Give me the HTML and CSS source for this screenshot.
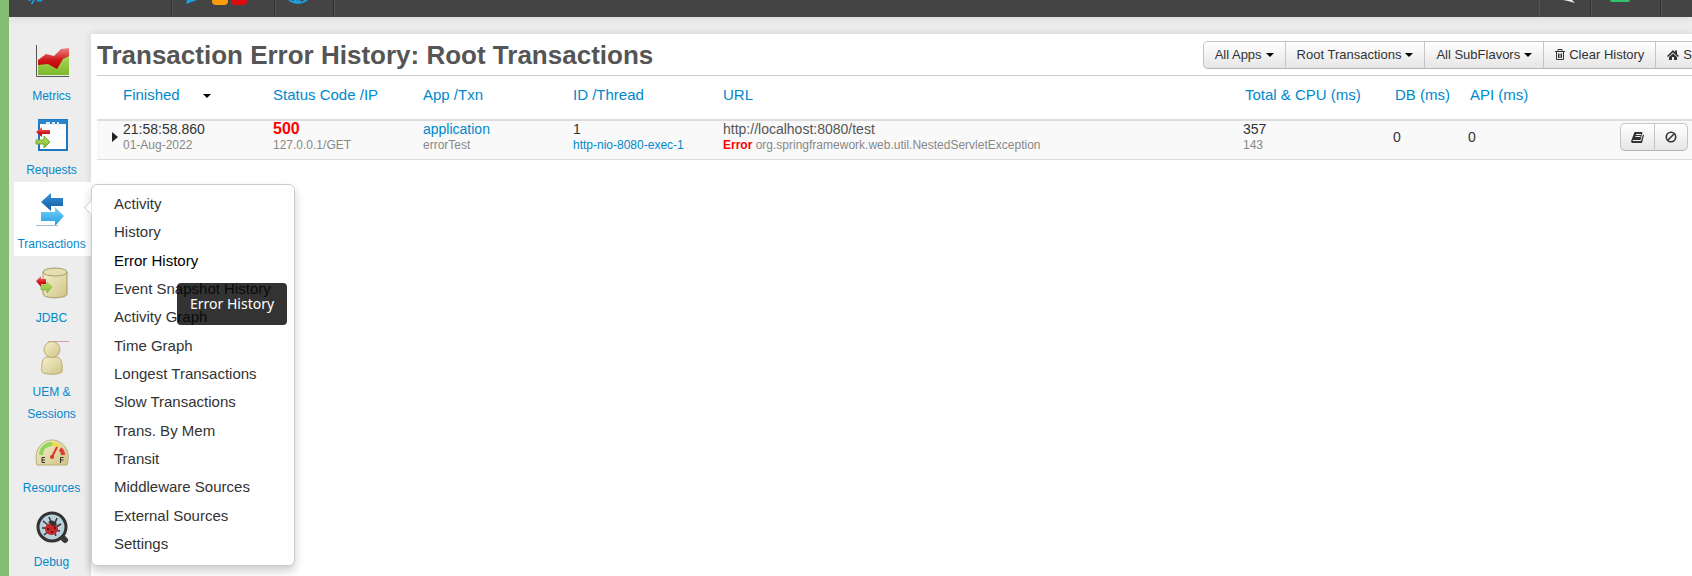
FILE: index.html
```html
<!DOCTYPE html>
<html lang="en">
<head>
    <meta charset="UTF-8">
    <meta name="viewport" content="width=device-width, initial-scale=1.0">
    <title>Transaction Error History</title>
    <link rel="stylesheet" href="styles.css">
</head>
<body>
    <header class="topbar">
        <div class="topbar-cell brand">
            <svg width="16" height="5" viewBox="0 0 16 5"><path d="M0 0h3M6 0L3.500 4M9 0q3 2 5 0" stroke="#1ba1e2" stroke-width="1.600" fill="none"/></svg>
        </div>
        <div class="topbar-cell alerts">
            <svg width="11" height="4" viewBox="0 0 11 4"><path d="M1 0h10L0 4z" fill="#1ba1e2"/></svg>
            <span class="pill warn"></span>
            <span class="pill crit"></span>
        </div>
        <div class="topbar-cell globe">
            <svg width="20" height="5" viewBox="0 0 20 5"><path d="M1 0q9 6 18 0M6 0l4 2 2-2" stroke="#1ba1e2" stroke-width="2" fill="none"/></svg>
        </div>
        <div class="topbar-space"></div>
        <div class="topbar-cell search">
            <svg width="12" height="3" viewBox="0 0 12 3"><path d="M0 0h9l3 3-7-2z" fill="#eee"/></svg>
        </div>
        <div class="topbar-cell status"><span class="pill ok"></span></div>
        <div class="topbar-cell last"></div>
    </header>

    <div class="layout">
        <nav class="sidebar">
            <a class="nav-item" href="#">
                <svg class="nav-icon" viewBox="0 0 32 32">
                    <defs>
                        <linearGradient id="red" x1="0" y1="0" x2="0" y2="1"><stop offset="0" stop-color="#f08080"/><stop offset=".6" stop-color="#cc1518"/><stop offset="1" stop-color="#b00"/></linearGradient>
                        <linearGradient id="green" x1="0" y1="0" x2="0" y2="1"><stop offset="0" stop-color="#bfe36a"/><stop offset="1" stop-color="#7cb82c"/></linearGradient>
                        <linearGradient id="cream" x1="0" y1="0" x2="1" y2="1"><stop offset="0" stop-color="#f5f0cf"/><stop offset="1" stop-color="#cfc484"/></linearGradient>
                        <linearGradient id="blue" x1="0" y1="0" x2="0" y2="1"><stop offset="0" stop-color="#3a8fd4"/><stop offset="1" stop-color="#0c5ea8"/></linearGradient>
                        <linearGradient id="sky" x1="0" y1="0" x2="0" y2="1"><stop offset="0" stop-color="#7dd4fa"/><stop offset="1" stop-color="#1c9be0"/></linearGradient>
                    </defs>
                    <path d="M2 17l9-5 7 4 7-10 8-2v26H2z" fill="url(#green)"/>
                    <path d="M2 15l8-6 8 2 7-7 8-1v8l-6 3-6 10-9-5-10 1z" fill="url(#red)"/>
                    <path d="M.5 0v31.500H33" stroke="#555" fill="none"/>
                </svg>
                <span>Metrics</span>
            </a>
            <a class="nav-item" href="#">
                <svg class="nav-icon" viewBox="0 0 32 32">
                    <path d="M3 1h28v30H3z" fill="#fdfdfd" stroke="#1c78bf" stroke-width="2"/>
                    <path d="M3 1h28v4H3z" fill="#2a86cc"/>
                    <path d="M10 3h4v3h-4zM16 3h3v3h-3zM21 3h2v3h-2z" fill="#dcebf5"/>
                    <path d="M0 13l6-5v3h8v4H6v3z" fill="url(#red)"/>
                    <path d="M14 23l-6-6v4H0v4h8v4z" fill="url(#green)" stroke="#79a83a"/>
                </svg>
                <span>Requests</span>
            </a>
            <a class="nav-item active" href="#">
                <svg class="nav-icon" viewBox="0 0 32 32">
                    <path d="M5 9L15 0v5h12v8H15v5z" fill="url(#blue)"/>
                    <path d="M28 23l-9-9v5H5v9h14v5z" fill="url(#sky)"/>
                    <path d="M0 32.500h22" stroke="#9cc0dc"/>
                </svg>
                <span>Transactions</span>
            </a>
            <a class="nav-item" href="#">
                <svg class="nav-icon" viewBox="0 0 32 32">
                    <path d="M7 5v22c0 5 24 5 24 0V5z" fill="url(#cream)" stroke="#a59b66"/>
                    <ellipse cx="19" cy="5" rx="12" ry="4" fill="#e5deb0" stroke="#a59b66"/>
                    <path d="M0 14l5-5v3h5v5H5v3z" fill="url(#red)"/>
                    <path d="M16 20l-5-5v3H5v5h6v3z" fill="url(#green)" stroke="#7fae45" stroke-width=".6"/>
                </svg>
                <span>JDBC</span>
            </a>
            <a class="nav-item" href="#">
                <svg class="nav-icon" viewBox="0 0 32 32">
                    <path d="M12 .500h21" stroke="#d5a0a0"/>
                    <path d="M6 31c-1-9 1-15 5-15h9c5 0 7 6 6 15-3 3-17 3-20 0z" fill="url(#cream)" stroke="#b9ae78"/>
                    <circle cx="16" cy="8.500" r="8" fill="url(#cream)" stroke="#b9ae78"/>
                </svg>
                <span>UEM &amp; Sessions</span>
            </a>
            <a class="nav-item" href="#">
                <svg class="nav-icon" viewBox="0 0 32 32">
                    <path d="M1 28C-3 12 7 3 16 3s20 9 15 25z" fill="url(#cream)" stroke="#b9ae78"/>
                    <path d="M5 18c0-6 4-11 11-11" stroke="#8fd45c" stroke-width="4" fill="none"/>
                    <path d="M16 7q4 0 7 3" stroke="#ecd94c" stroke-width="4" fill="none"/>
                    <path d="M24 12q3 2 3 6" stroke="#e03a36" stroke-width="4" fill="none"/>
                    <path d="M21 10l-5 10" stroke="#d8312f" stroke-width="2"/>
                    <circle cx="16" cy="20" r="2" fill="#d8312f"/>
                    <path d="M9 20.500H6v5h3M6 23h3M24.500 26v-5.500h3M24.500 23h3" stroke="#333" fill="none"/>
                </svg>
                <span>Resources</span>
            </a>
            <a class="nav-item" href="#">
                <svg class="nav-icon" viewBox="0 0 32 32">
                    <path d="M25 25l4 4" stroke="#3a3a3a" stroke-width="6" stroke-linecap="round"/>
                    <circle cx="16" cy="16" r="14" fill="#b9d0da" stroke="#333" stroke-width="3"/>
                    <path d="M7 10l5 4M6 17h6M8 24l5-4M13 6l2 5M21 7l-2 5M25 13l-5 3M24 20l-5-1M20 25l-2-5" stroke="#333" stroke-width="1.500"/>
                    <ellipse cx="15.500" cy="18" rx="6.500" ry="6" fill="#c9262c"/>
                    <path d="M12 11q5-4 9 2l-3 3z" fill="#333"/>
                    <path d="M11 17h2v2h-2zM15 20h2v2h-2zM18 16h2v2h-2z" fill="#611"/>
                </svg>
                <span>Debug</span>
            </a>

            <div class="submenu">
                <ul class="submenu-list">
                    <li><a href="#">Activity</a></li>
                    <li><a href="#">History</a></li>
                    <li><a class="current" href="#">Error History</a></li>
                    <li><a href="#">Event Snapshot History</a></li>
                    <li><a href="#">Activity Graph</a></li>
                    <li><a href="#">Time Graph</a></li>
                    <li><a href="#">Longest Transactions</a></li>
                    <li><a href="#">Slow Transactions</a></li>
                    <li><a href="#">Trans. By Mem</a></li>
                    <li><a href="#">Transit</a></li>
                    <li><a href="#">Middleware Sources</a></li>
                    <li><a href="#">External Sources</a></li>
                    <li><a href="#">Settings</a></li>
                </ul>
                <div class="tooltip" role="tooltip">Error History</div>
            </div>
        </nav>

        <main class="panel">
            <div class="panel-head">
                <h1>Transaction Error History: Root Transactions</h1>
                <div class="btn-group">
                    <button class="btn" type="button">All Apps <span class="caret"></span></button>
                    <button class="btn" type="button">Root Transactions <span class="caret"></span></button>
                    <button class="btn" type="button">All SubFlavors <span class="caret"></span></button>
                    <button class="btn" type="button">
                        <svg width="10" height="11" viewBox="0 0 10 11"><path d="M0 2.500h10M3 2V.500h4V2M1.500 3v7.500h7V3M3.500 4.500v4.500M5 4.500v4.500M6.500 4.500v4.500" stroke="#333" fill="none"/></svg>
                        Clear History
                    </button>
                    <button class="btn btn-cut" type="button">
                        <svg width="12" height="10" viewBox="0 0 12 10"><path d="M6 0l2 2V.500h2V4l2 2-1 1-5-4.500L1 7 0 6zM6 3.500L10 7v3H7V7H5v3H2V7z" fill="#333"/></svg>
                        S
                    </button>
                </div>
            </div>

            <table class="history">
                <colgroup>
                    <col class="col-toggle">
                    <col class="col-text">
                    <col class="col-text">
                    <col class="col-text">
                    <col class="col-text">
                    <col>
                    <col class="col-text">
                    <col class="col-num">
                    <col class="col-api">
                    <col class="col-actions">
                </colgroup>
                <thead>
                    <tr>
                        <th></th>
                        <th><a href="#">Finished</a><span class="caret sort"></span></th>
                        <th><a href="#">Status Code /IP</a></th>
                        <th><a href="#">App /Txn</a></th>
                        <th><a href="#">ID /Thread</a></th>
                        <th><a href="#">URL</a></th>
                        <th class="num"><a href="#">Total &amp; CPU (ms)</a></th>
                        <th class="num"><a href="#">DB (ms)</a></th>
                        <th class="num"><a href="#">API (ms)</a></th>
                        <th></th>
                    </tr>
                </thead>
                <tbody>
                    <tr>
                        <td class="mid"><span class="expander"></span></td>
                        <td><div>21:58:58.860</div><small>01-Aug-2022</small></td>
                        <td><div class="code">500</div><small>127.0.0.1/GET</small></td>
                        <td><div><a href="#">application</a></div><small>errorTest</small></td>
                        <td><div>1</div><small><a href="#">http-nio-8080-exec-1</a></small></td>
                        <td><div class="url">http://localhost:8080/test</div><small><b>Error</b> org.springframework.web.util.NestedServletException</small></td>
                        <td><div>357</div><small>143</small></td>
                        <td class="mid">0</td>
                        <td class="mid">0</td>
                        <td class="mid actions">
                            <div class="btn-group">
                                <button class="btn" type="button" aria-label="Details">
                                    <svg width="13" height="11" viewBox="0 0 13 11"><path d="M3.500 0h8L9.500 8H2L1.500 9h8.500L12 2.500l1 .5-2 8H1Q-.500 10 .500 8z" fill="#333"/><path d="M5 2.500h5M4.500 4.500h5" stroke="#eee"/></svg>
                                </button>
                                <button class="btn" type="button" aria-label="Ignore">
                                    <svg width="12" height="12" viewBox="0 0 12 12"><circle cx="6" cy="6" r="4.700" stroke="#333" stroke-width="1.600" fill="none"/><path d="M9 3L3 9" stroke="#333" stroke-width="1.600"/></svg>
                                </button>
                            </div>
                        </td>
                    </tr>
                </tbody>
            </table>
        </main>
    </div>
</body>
</html>
```
FILE: styles.css
```css
* {
    box-sizing: border-box;
}

body {
    margin: 0;
    min-height: 100vh;
    display: flex;
    flex-direction: column;
    border-left: 9px solid #85bc72;
    background: #ededed;
    color: #333;
    font-family: "Liberation Sans", Arial, sans-serif;
    font-size: 14px;
    line-height: 16px;
    overflow-x: hidden;
}

a {
    color: #0088cc;
    text-decoration: none;
}

/* Top bar */
.topbar {
    display: flex;
    height: 17px;
    background: #444;
    box-shadow: 0 1px 10px rgba(0,0,0,0.1);
}

.topbar-cell {
    display: flex;
    align-items: flex-start;
    border-right: 1px solid #2e2e2e;
    box-shadow: 1px 0 0 #555;
}

.topbar-space {
    flex: 1;
    border-right: 1px solid #555;
}

.brand {
    width: 163px;
    padding-left: 19px;
}

.alerts {
    width: 103px;
    padding-left: 14px;
}

.globe {
    width: 59px;
    padding-left: 13px;
}

.search {
    width: 51px;
    padding-left: 23px;
}

.status {
    width: 70px;
    padding-left: 19px;
}

.last {
    width: 31px;
    border-right: none;
}

.pill {
    width: 16px;
    height: 5px;
    border-radius: 0 0 4px 4px;
}

.warn {
    margin: 0 3px 0 15px;
    background: #ff9a0a;
}

.crit {
    background: #dd0a10;
}

.ok {
    width: 20px;
    height: 2px;
    background: #2fc56c;
}

/* Sidebar */
.layout {
    display: flex;
    flex: 1;
    padding-top: 17px;
}

.sidebar {
    position: relative;
    z-index: 2;
    width: 82px;
    flex: none;
    padding-left: 5px;
}

.nav-item {
    display: flex;
    flex-direction: column;
    align-items: center;
    gap: 8px;
    padding: 11px 5px 1px 3px;
    font-size: 12px;
    line-height: 22px;
    text-align: center;
}

.nav-item.active {
    background: #fff;
}

.nav-icon {
    width: 32px;
    height: 32px;
    overflow: visible;
}

.submenu {
    position: absolute;
    top: 150px;
    left: 82px;
    width: 204px;
    padding: 5px 0 7px;
    background: #fff;
    border: 1px solid #ccc;
    border-radius: 6px;
    box-shadow: 0 5px 10px rgba(0,0,0,0.2);
    font-size: 15px;
}

.submenu::before {
    content: "";
    position: absolute;
    top: 17px;
    left: -6px;
    width: 10px;
    height: 10px;
    background: #fff;
    border-left: 1px solid #ccc;
    border-bottom: 1px solid #ccc;
    transform: rotate(45deg);
    clip-path: polygon(0 0, 100% 100%, 0 100%);
}

.submenu-list {
    display: flex;
    flex-direction: column;
    justify-content: space-between;
    min-height: 368px;
    margin: 0;
    padding: 0;
    list-style: none;
}

.submenu-list a {
    display: block;
    padding: 0 22px;
    line-height: 28px;
    color: #333;
}

.submenu-list .current {
    color: #000;
}

.tooltip {
    position: absolute;
    top: 98px;
    left: 85px;
    padding: 13px;
    border-radius: 4px;
    background: rgba(0,0,0,0.8);
    color: #fff;
    font-family: "Noto Sans", sans-serif;
    font-size: 14px;
    white-space: nowrap;
}

/* Main panel */
.panel {
    flex: 1;
    min-width: 0;
    padding-left: 6px;
    background: #fff;
    box-shadow: 0 0 8px rgba(0,0,0,0.12);
    overflow: hidden;
}

.panel-head {
    display: flex;
    align-items: center;
    justify-content: space-between;
    height: 42px;
    border-bottom: 1px solid #ccc;
    white-space: nowrap;
}

.panel-head h1 {
    margin: 0;
    color: #555;
    font-size: 26px;
    line-height: 40px;
}

.btn-group {
    display: flex;
}

.btn {
    display: flex;
    align-items: center;
    gap: 4px;
    height: 28px;
    margin-left: -1px;
    padding: 0 11px;
    border: 1px solid #c5c5c5;
    border-bottom-color: #b3b3b3;
    background: linear-gradient(#fff, #e6e6e6);
    color: #333;
    font-family: inherit;
    font-size: 13px;
    white-space: nowrap;
    cursor: pointer;
}

.btn:first-child {
    margin-left: 0;
    border-radius: 5px 0 0 5px;
}

.btn:last-child {
    border-radius: 0 5px 5px 0;
}

.btn-cut {
    padding-right: 0;
    border-right: none;
}

.panel-head .btn:last-child {
    border-radius: 0;
}

.caret {
    display: inline-block;
    border: 4px solid transparent;
    border-top-color: #000;
    border-bottom: 0;
}

.sort {
    margin-left: 23px;
    vertical-align: middle;
}

/* History table */
.history {
    width: 100%;
    border-collapse: separate;
    border-spacing: 0;
    table-layout: fixed;
}

.col-toggle {
    width: 26px;
}

.col-text {
    width: 150px;
}

.col-num {
    width: 75px;
}

.col-api {
    width: 149px;
}

.col-actions {
    width: 75px;
}

.history th {
    padding: 9px 0 14px;
    font-size: 15px;
    font-weight: normal;
    line-height: 20px;
    text-align: left;
}

.history th.num {
    padding-left: 2px;
}

.history td {
    padding: 0 0 6px;
    border-top: 2px solid #ddd;
    border-bottom: 1px solid #ddd;
    background: #f9f9f9;
    vertical-align: top;
    white-space: nowrap;
}

.history td.mid {
    vertical-align: middle;
}

.history small {
    display: block;
    color: #888;
    font-size: 12px;
}

.history .code {
    color: #f00;
    font-size: 16px;
    font-weight: bold;
}

.history b {
    color: #f00;
}

.history .url {
    color: #555;
}

.expander {
    display: block;
    width: 0;
    margin-left: 15px;
    border: 5px solid transparent;
    border-left: 6px solid #222;
    border-right: 0;
}

.history td.actions {
    padding-right: 4px;
}

.actions .btn-group {
    justify-content: flex-end;
}

.actions .btn {
    padding: 0 10px;
}
```
